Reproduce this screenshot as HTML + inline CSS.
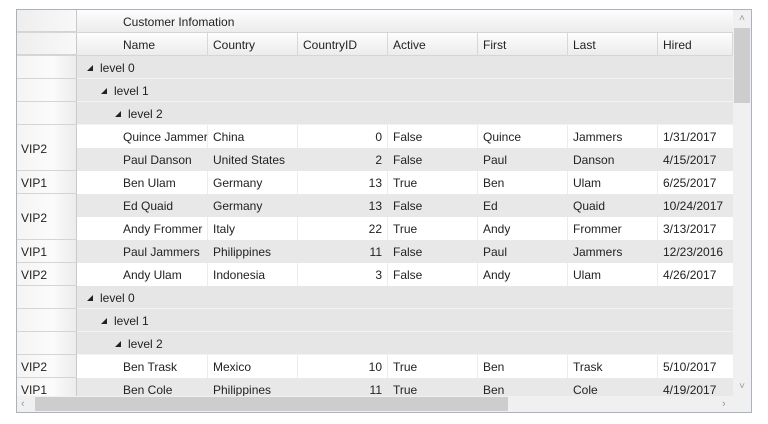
<!DOCTYPE html>
<html><head><meta charset="utf-8"><style>
*{box-sizing:border-box;margin:0;padding:0}
body{width:768px;height:424px;background:#fff;font-family:"Liberation Sans",sans-serif;font-size:12px;color:#222;position:relative;overflow:hidden}
#g{position:absolute;left:16px;top:9px;width:736px;height:404px;border:1px solid #a9b2bd;overflow:hidden;background:#fff}
.r{position:absolute;left:0;height:23px;width:716px;display:flex;line-height:24px;white-space:nowrap}
.c{overflow:hidden;padding-left:5px;border-right:1px solid #ececec;height:23px}
.rh{width:60px;border-right:1px solid #c9c9c9;border-bottom:1px solid #d4d4d4;background:linear-gradient(90deg,#f4f4f4,#fbfbfb 60%,#ececec);padding-left:4px}
.w{background:#fff}.d{background:#e8e8e8}.d .c{border-right-color:#e8e8e8}
.n{width:131px;padding-left:46px}.k{width:90px}.id{width:90px;text-align:right;padding-right:5px}.h{width:75px;border-right:none}
.hd{background:linear-gradient(#fdfdfd,#ececec);border-bottom:1px solid #d6d6d6}
.hd .c{border-right:1px solid #d8d8d8}
.grp{background:#e6e6e6;border-bottom:1px solid #f2f2f2}
.tri{display:inline-block;width:0;height:0;border-left:6px solid transparent;border-bottom:6px solid #222;margin-right:7px;vertical-align:1px}
</style></head><body>
<div id="g">
<div class="r hd" style="top:0;height:23px"><div class="rh" style="background:linear-gradient(90deg,#eee,#f8f8f8)"></div><div class="c" style="padding-left:46px;border:none">Customer Infomation</div></div>
<div class="r hd" style="top:23px"><div class="rh" style="background:linear-gradient(90deg,#eee,#f8f8f8)"></div><div class="c n">Name</div><div class="c k">Country</div><div class="c k">CountryID</div><div class="c k">Active</div><div class="c k">First</div><div class="c k">Last</div><div class="c h">Hired</div></div>

<div class="r" style="top:46px"><div class="rh"></div><div class="grp" style="flex:1;padding-left:10px"><span class="tri"></span>level 0</div></div>
<div class="r" style="top:69px"><div class="rh"></div><div class="grp" style="flex:1;padding-left:24px"><span class="tri"></span>level 1</div></div>
<div class="r" style="top:92px"><div class="rh"></div><div class="grp" style="flex:1;padding-left:38px"><span class="tri"></span>level 2</div></div>

<div class="r w" style="top:115px"><div class="rh" style="border-bottom:none"></div><div class="c n">Quince Jammers</div><div class="c k">China</div><div class="c id">0</div><div class="c k">False</div><div class="c k">Quince</div><div class="c k">Jammers</div><div class="c h">1/31/2017</div></div>
<div class="r d" style="top:138px"><div class="rh"></div><div class="c n">Paul Danson</div><div class="c k">United States</div><div class="c id">2</div><div class="c k">False</div><div class="c k">Paul</div><div class="c k">Danson</div><div class="c h">4/15/2017</div></div>
<div class="r w" style="top:161px"><div class="rh">VIP1</div><div class="c n">Ben Ulam</div><div class="c k">Germany</div><div class="c id">13</div><div class="c k">True</div><div class="c k">Ben</div><div class="c k">Ulam</div><div class="c h">6/25/2017</div></div>
<div class="r d" style="top:184px"><div class="rh" style="border-bottom:none"></div><div class="c n">Ed Quaid</div><div class="c k">Germany</div><div class="c id">13</div><div class="c k">False</div><div class="c k">Ed</div><div class="c k">Quaid</div><div class="c h">10/24/2017</div></div>
<div class="r w" style="top:207px"><div class="rh"></div><div class="c n">Andy Frommer</div><div class="c k">Italy</div><div class="c id">22</div><div class="c k">True</div><div class="c k">Andy</div><div class="c k">Frommer</div><div class="c h">3/13/2017</div></div>
<div class="r d" style="top:230px"><div class="rh">VIP1</div><div class="c n">Paul Jammers</div><div class="c k">Philippines</div><div class="c id">11</div><div class="c k">False</div><div class="c k">Paul</div><div class="c k">Jammers</div><div class="c h">12/23/2016</div></div>
<div class="r w" style="top:253px"><div class="rh">VIP2</div><div class="c n">Andy Ulam</div><div class="c k">Indonesia</div><div class="c id">3</div><div class="c k">False</div><div class="c k">Andy</div><div class="c k">Ulam</div><div class="c h">4/26/2017</div></div>

<div class="r" style="top:276px"><div class="rh"></div><div class="grp" style="flex:1;padding-left:10px"><span class="tri"></span>level 0</div></div>
<div class="r" style="top:299px"><div class="rh"></div><div class="grp" style="flex:1;padding-left:24px"><span class="tri"></span>level 1</div></div>
<div class="r" style="top:322px"><div class="rh"></div><div class="grp" style="flex:1;padding-left:38px"><span class="tri"></span>level 2</div></div>
<div class="r w" style="top:345px"><div class="rh">VIP2</div><div class="c n">Ben Trask</div><div class="c k">Mexico</div><div class="c id">10</div><div class="c k">True</div><div class="c k">Ben</div><div class="c k">Trask</div><div class="c h">5/10/2017</div></div>
<div class="r d" style="top:368px"><div class="rh">VIP1</div><div class="c n">Ben Cole</div><div class="c k">Philippines</div><div class="c id">11</div><div class="c k">True</div><div class="c k">Ben</div><div class="c k">Cole</div><div class="c h">4/19/2017</div></div>

<div style="position:absolute;left:4px;top:116px;line-height:46px">VIP2</div>
<div style="position:absolute;left:4px;top:185px;line-height:46px">VIP2</div>

<div style="position:absolute;left:716px;top:0;width:18px;height:386px;background:#f0f0f0">
 <div style="position:absolute;top:2px;left:0;width:18px;text-align:center;color:#999;font-size:10px;line-height:14px">&#708;</div>
 <div style="position:absolute;top:18px;left:1px;width:16px;height:75px;background:#cdcdcd"></div>
 <div style="position:absolute;top:370px;left:0;width:18px;text-align:center;color:#999;font-size:10px;line-height:14px">&#709;</div>
</div>
<div style="position:absolute;left:0;top:386px;width:716px;height:16px;background:#f0f0f0">
 <div style="position:absolute;left:4px;top:0;color:#999;font-size:11px;line-height:16px">&lsaquo;</div>
 <div style="position:absolute;left:18px;top:1px;width:473px;height:14px;background:#cdcdcd"></div>
 <div style="position:absolute;left:705px;top:0;color:#999;font-size:11px;line-height:16px">&rsaquo;</div>
</div>
<div style="position:absolute;left:716px;top:386px;width:18px;height:16px;background:#f0f0f0"></div>
</div>
</body></html>
